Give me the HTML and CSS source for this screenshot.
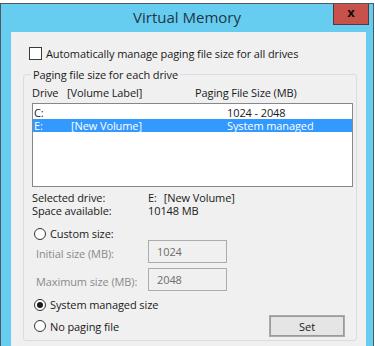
FILE: index.html
```html
<!DOCTYPE html>
<html lang="en">
<head>
    <meta charset="UTF-8">
    <meta name="viewport" content="width=device-width, initial-scale=1.0">
    <title>Virtual Memory</title>
    <link rel="stylesheet" href="styles.css">
</head>
<body>
    <div class="desk-strip"></div>
    <div class="window">
        <div class="titlebar">
            <span></span>
            <div class="title">Virtual Memory</div>
            <div class="close-btn">x</div>
        </div>
        <div class="content">
            <div class="check-row">
                <span class="checkbox"></span>
                <span>Automatically manage paging file size for all drives</span>
            </div>
            <fieldset class="group">
                <legend>Paging file size for each drive</legend>
                <div class="list-head">
                    <span>Drive</span>
                    <span>[Volume Label]</span>
                    <span>Paging File Size (MB)</span>
                </div>
                <div class="listbox">
                    <div class="list-row">
                        <span>C:</span>
                        <span></span>
                        <span>1024 - 2048</span>
                    </div>
                    <div class="list-row selected">
                        <span>E:</span>
                        <span>[New Volume]</span>
                        <span>System managed</span>
                    </div>
                </div>
                <div class="info-row">
                    <span class="info-key">Selected drive:</span>
                    <span class="info-val"><span class="drive-letter">E:</span>[New Volume]</span>
                </div>
                <div class="info-row">
                    <span class="info-key">Space available:</span>
                    <span class="info-val">10148 MB</span>
                </div>
                <div class="radio-row custom">
                    <span class="radio"></span>
                    <span>Custom size:</span>
                </div>
                <div class="size-row first">
                    <span class="size-key">Initial size (MB):</span>
                    <div class="size-box">1024</div>
                </div>
                <div class="size-row">
                    <span class="size-key">Maximum size (MB):</span>
                    <div class="size-box">2048</div>
                </div>
                <div class="radio-row managed">
                    <span class="radio checked"></span>
                    <span>System managed size</span>
                </div>
                <div class="bottom-row">
                    <div class="radio-row">
                        <span class="radio"></span>
                        <span>No paging file</span>
                    </div>
                    <button class="set-btn">Set</button>
                </div>
            </fieldset>
        </div>
    </div>
</body>
</html>
```

FILE: styles.css
```css
body {
    margin: 0;
    background: #ffffff;
    font-family: "Open Sans", "Noto Sans", sans-serif;
    font-size: 11px;
    letter-spacing: -0.1px;
    color: #1a1a1a;
    overflow: hidden;
}
.desk-strip {
    height: 3px;
    background: #ffffff;
}
.window {
    width: 372px;
    height: 343px;
    border: 1px solid #4d5a60;
    border-bottom: none;
    background: #67cdf0;
    display: flex;
    flex-direction: column;
}
.titlebar {
    height: 28px;
    display: grid;
    grid-template-columns: 1fr auto 1fr;
    align-items: center;
}
.title {
    font-size: 15px;
    letter-spacing: 0;
    color: #1f3645;
    padding-bottom: 2px;
}
.close-btn {
    justify-self: end;
    align-self: start;
    width: 34px;
    height: 20px;
    margin-right: 4px;
    background: #c9514c;
    border: 1px solid #4a3c3c;
    border-top: none;
    color: #111;
    font-weight: bold;
    font-size: 13px;
    line-height: 17px;
    text-align: center;
}
.content {
    flex: 1;
    margin: 0 7px 0 10px;
    background: #f0f0f0;
    padding: 15px 0 0 12px;
    box-sizing: border-box;
}
.check-row {
    display: flex;
    align-items: center;
    height: 13px;
    margin-left: 6px;
}
.checkbox {
    width: 11px;
    height: 11px;
    border: 1px solid #3c3c3c;
    background: #fff;
    margin-right: 4px;
}
.group {
    margin: 8px 0 0 0;
    width: 334px;
    box-sizing: border-box;
    border: 1px solid #d7dde2;
    border-radius: 3px;
    padding: 5px 3px 3px 8px;
}
.group legend {
    padding: 0 2px;
    margin-left: -1px;
    line-height: 13px;
}
.list-head {
    display: grid;
    grid-template-columns: 35px 128px auto;
    line-height: 13px;
}
.listbox {
    margin-top: 4px;
    height: 84px;
    box-sizing: border-box;
    border: 1px solid #828790;
    background: #fff;
    padding-top: 2px;
}
.list-row {
    display: grid;
    grid-template-columns: 37px 156px auto;
    line-height: 13px;
    padding-left: 1px;
}
.list-row.selected {
    background: #3399ff;
    color: #fff;
}
.info-row {
    display: flex;
    line-height: 13px;
}
.listbox + .info-row {
    margin-top: 4px;
}
.info-key {
    width: 116px;
}
.drive-letter {
    margin-right: 7px;
}
.radio-row {
    display: flex;
    align-items: center;
    line-height: 13px;
    padding-left: 2px;
}
.radio-row.custom {
    margin-top: 10px;
}
.radio-row.managed {
    margin-top: 7px;
}
.radio {
    width: 10px;
    height: 10px;
    border: 1px solid #333;
    border-radius: 50%;
    background: #fff;
    margin-right: 4px;
    display: flex;
    align-items: center;
    justify-content: center;
}
.radio.checked::after {
    content: "";
    width: 6px;
    height: 6px;
    border-radius: 50%;
    background: #1a1a1a;
}
.size-row {
    display: flex;
    align-items: center;
    margin-top: 5px;
}
.size-row.first {
    margin-top: 0;
}
.size-key {
    width: 112px;
    padding-left: 4px;
    color: #8a8a8a;
    padding-top: 3px;
}
.size-box {
    width: 79px;
    height: 23px;
    box-sizing: border-box;
    border: 1px solid #acacac;
    color: #6d6d6d;
    padding: 3px 0 0 8px;
}
.bottom-row {
    display: flex;
    align-items: center;
    justify-content: space-between;
    margin-top: 4px;
}
.set-btn {
    width: 76px;
    height: 22px;
    margin-right: 8px;
    border: 1px solid #acacac;
    box-shadow: inset 0 0 0 1px #9a9a9a;
    background: #e5e5e5;
    font-family: inherit;
    font-size: 11px;
    color: #1a1a1a;
}
```
